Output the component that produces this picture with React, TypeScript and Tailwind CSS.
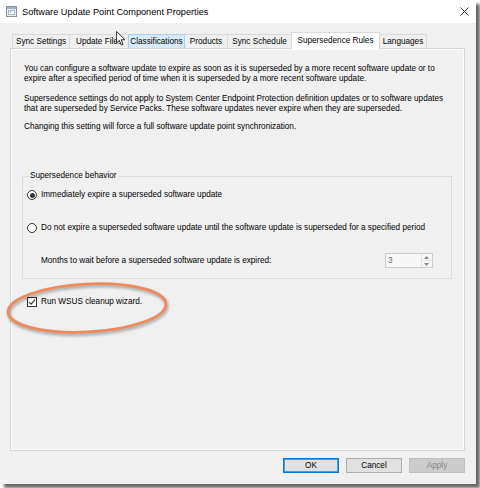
import React, { useState } from "react";

const TABS = [
  { label: "Sync Settings", w: "w-[58px]" },
  { label: "Update Files", w: "w-[60px]" },
  { label: "Classifications", w: "w-[57px]" },
  { label: "Products", w: "w-[44px]" },
  { label: "Sync Schedule", w: "w-[65px]" },
  { label: "Supersedence Rules", w: "w-[89px]" },
  { label: "Languages", w: "w-[48px]" },
];

function Radio({ checked }: { checked?: boolean }) {
  return (
    <div className="flex h-[10px] w-[10px] shrink-0 items-center justify-center rounded-full border border-[#333] bg-white">
      {checked && <div className="h-[5px] w-[5px] rounded-full bg-[#333]" />}
    </div>
  );
}

function Checkbox({ checked }: { checked?: boolean }) {
  return (
    <div className="flex h-[10px] w-[10px] shrink-0 items-center justify-center border border-[#333] bg-white">
      {checked && (
        <svg width="8" height="8" viewBox="0 0 8 8">
          <path d="M1 4.2 L3 6.2 L7 1.6" fill="none" stroke="#333" strokeWidth="1.1" />
        </svg>
      )}
    </div>
  );
}

export default function App() {
  const [selected, setSelected] = useState("Supersedence Rules");
  const [hovered, setHovered] = useState<string | null>("Classifications");

  return (
    <div className="h-[488px] w-[480px] bg-white font-['Liberation_Sans',Arial,sans-serif] text-[8.2px] leading-[10px] text-black">
      <div className="relative flex h-[484px] w-[476px] flex-col bg-[#f0f0f0] shadow-[4px_4px_3px_rgba(0,0,0,0.6)]">
        {/* title bar */}
        <div className="flex h-[23px] shrink-0 items-center bg-white">
          <svg className="ml-[6px]" width="11" height="11" viewBox="0 0 11 11">
            <rect x="0.5" y="0.5" width="10" height="10" fill="#e8eef5" stroke="#8a9099" />
            <rect x="1" y="1" width="9" height="2" fill="#9fb3c8" />
            <rect x="2.5" y="4.5" width="6" height="4" fill="#ffffff" stroke="#b0b8c2" />
            <rect x="3.5" y="5.5" width="2" height="1" fill="#6aa0d8" />
          </svg>
          <span className="ml-[5px] text-[9.2px] leading-[12px]">Software Update Point Component Properties</span>
          <svg className="ml-auto mr-[7px]" width="9" height="9" viewBox="0 0 9 9">
            <path d="M0.5 0.5 L8.5 8.5 M8.5 0.5 L0.5 8.5" stroke="#222" strokeWidth="0.9" />
          </svg>
        </div>

        <div className="flex flex-1 flex-col pl-[10px] pr-[11px] pt-[9px]">
          {/* tabs */}
          <div className="flex h-[16px] items-end pl-[2px]">
            {TABS.map((t, i) => {
              const isSel = t.label === selected;
              const isHov = !isSel && t.label === hovered;
              return (
                <button
                  key={t.label}
                  onClick={() => setSelected(t.label)}
                  onMouseEnter={() => setHovered(t.label)}
                  onMouseLeave={() => setHovered(null)}
                  className={`${t.w} ${i > 0 ? "-ml-px" : ""} flex shrink-0 items-center justify-center whitespace-nowrap border border-b-0 ${
                    isSel
                      ? "relative z-10 -mb-px h-[17px] border-[#d9d9d9] bg-white"
                      : isHov
                      ? "relative z-[5] h-[14px] border-[#a8cdef] bg-[#d8eaf9]"
                      : "h-[14px] border-[#d9d9d9] bg-[#f0f0f0]"
                  }`}
                >
                  {t.label}
                </button>
              );
            })}
          </div>

          {/* tab page */}
          <div className="flex h-[403px] flex-col border border-[#d6d6d6] shadow-[inset_0_0_0_1px_#fbfbfb]">
            <div className="pl-[13px] pt-[15px]">
              <p className="whitespace-nowrap">
                You can configure a software update to expire as soon as it is superseded by a more recent software update or to
                <br />
                expire after a specified period of time when it is superseded by a more recent software update.
              </p>
              <p className="mt-[10px] whitespace-nowrap">
                Supersedence settings do not apply to System Center Endpoint Protection definition updates or to software updates
                <br />
                that are superseded by Service Packs. These software updates never expire when they are superseded.
              </p>
              <p className="mt-[8px] whitespace-nowrap">
                Changing this setting will force a full software update point synchronization.
              </p>
            </div>

            <fieldset className="ml-[11px] mr-[12px] mt-[39px] border border-[#dcdcdc] pb-[10px]">
              <legend className="ml-[6px] px-[1px]">Supersedence behavior</legend>
              <div className="mt-[9px] flex h-[10px] items-center gap-[4px] pl-[4px]">
                <Radio checked />
                <span>Immediately expire a superseded software update</span>
              </div>
              <div className="mt-[23px] flex h-[10px] items-center gap-[4px] pl-[4px]">
                <Radio />
                <span>Do not expire a superseded software update until the software update is superseded for a specified period</span>
              </div>
              <div className="mt-[20px] flex h-[15px] items-center pl-[18px] pr-[18px]">
                <span>Months to wait before a superseded software update is expired:</span>
                <div className="ml-auto flex h-[15px] w-[48px] items-center border border-[#cccccc] bg-[#f6f6f6]">
                  <span className="pl-[2px] text-[#6d6d6d]">3</span>
                  <div className="ml-auto mr-px flex h-[13px] w-[10px] flex-col border-l border-[#e2e2e2]">
                    <div className="flex flex-1 items-center justify-center border-b border-[#e2e2e2]">
                      <svg width="5" height="3" viewBox="0 0 5 3"><path d="M0 3 L2.5 0 L5 3 Z" fill="#8a8a8a" /></svg>
                    </div>
                    <div className="flex flex-1 items-center justify-center">
                      <svg width="5" height="3" viewBox="0 0 5 3"><path d="M0 0 L2.5 3 L5 0 Z" fill="#8a8a8a" /></svg>
                    </div>
                  </div>
                </div>
              </div>
            </fieldset>

            <div className="ml-[16px] mt-[18px] flex h-[10px] items-center gap-[4px]">
              <Checkbox checked />
              <span>Run WSUS cleanup wizard.</span>
            </div>
          </div>

          {/* buttons */}
          <div className="mt-[7px] flex justify-end gap-[7px]">
            <button className="flex h-[15px] w-[56px] items-center justify-center border border-[#0078d7] bg-[#e1e1e1] shadow-[inset_0_0_0_1px_#4a9ae0]">OK</button>
            <button className="flex h-[15px] w-[56px] items-center justify-center border border-[#adadad] bg-[#e1e1e1]">Cancel</button>
            <button disabled className="flex h-[15px] w-[56px] items-center justify-center border border-[#bfbfbf] bg-[#cccccc] text-[#838383]">Apply</button>
          </div>
        </div>

        {/* annotation ellipse drawn over the dialog */}
        <svg className="pointer-events-none absolute left-[2px] top-[280px] drop-shadow-[1px_2px_1.5px_rgba(0,0,0,0.35)]" width="172" height="56" viewBox="0 0 172 56">
          <ellipse cx="85" cy="28" rx="79" ry="24" fill="none" stroke="#f0895b" strokeWidth="2.8" transform="rotate(-3 85 28)" />
        </svg>

        {/* mouse pointer */}
        <svg className="pointer-events-none absolute left-[116px] top-[31px]" width="10" height="15" viewBox="0 0 11 17">
          <path d="M0.5 0.5 L0.5 13.5 L3.6 10.6 L5.8 15.8 L7.8 15 L5.7 9.9 L10 9.9 Z" fill="#fff" stroke="#000" strokeWidth="0.9" strokeLinejoin="round" />
        </svg>
      </div>
    </div>
  );
}
